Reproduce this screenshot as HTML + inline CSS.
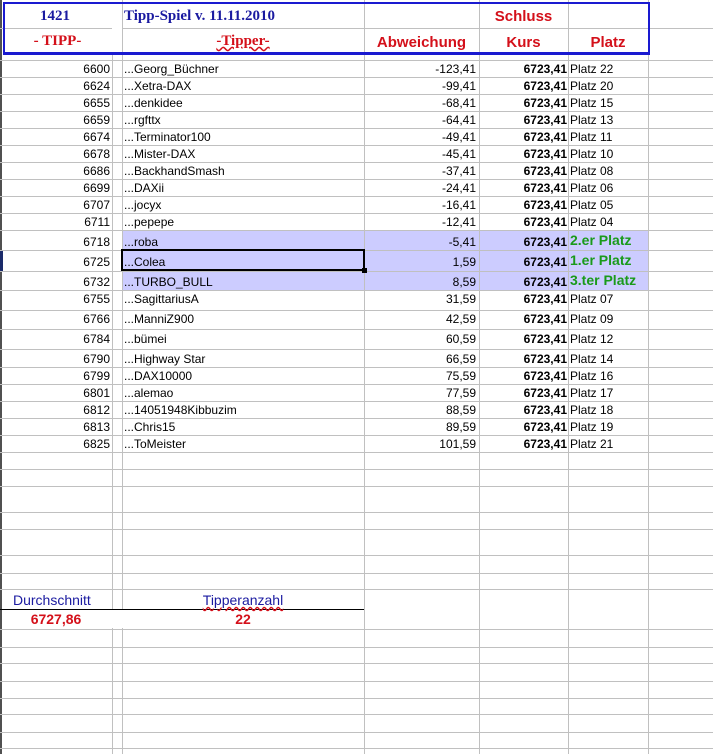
<!DOCTYPE html>
<html style="overflow:hidden;height:754px"><head><meta charset="utf-8"><style>
body{margin:0;width:713px;height:754px;background:#fff;position:relative;overflow:hidden;font-family:"Liberation Sans",Arial,sans-serif;font-size:12px;color:#000}
div{position:absolute}
.v{top:0;width:1px;height:754px;background:#c0c0c0}
.h{left:0;width:713px;height:1px;background:#c0c0c0}
.n{width:110px;left:0;text-align:right}
.nm{left:124px}
.ab{left:364px;width:112px;text-align:right}
.k{left:479px;width:88px;text-align:right;font-weight:bold}
.p{left:570px}
.g{left:570px;color:#1a9a1a;font-weight:bold;font-size:14px}
.ser{font-family:"Liberation Serif",serif;font-weight:bold;font-size:15px}
.rh{font-weight:bold;font-size:15px;color:#d4101a;text-align:center}
</style></head><body>
<div style="left:122px;top:230px;width:526px;height:60px;background:#ccccff"></div>
<div class="v" style="left:112px;top:53px;height:701px"></div>
<div class="v" style="left:122px"></div>
<div class="v" style="left:364px"></div>
<div class="v" style="left:479px"></div>
<div class="v" style="left:568px"></div>
<div class="v" style="left:648px"></div>
<div style="left:0;top:0;width:2px;height:754px;background:#505050"></div>
<div style="left:0;top:250px;width:3px;height:21px;background:#1a2a6a"></div>
<div class="h" style="top:28px"></div>
<div class="h" style="top:60px"></div>
<div class="h" style="top:77px"></div><div class="h" style="top:94px"></div><div class="h" style="top:111px"></div><div class="h" style="top:128px"></div><div class="h" style="top:145px"></div><div class="h" style="top:162px"></div><div class="h" style="top:179px"></div><div class="h" style="top:196px"></div><div class="h" style="top:213px"></div><div class="h" style="top:230px"></div><div class="h" style="top:250px"></div><div class="h" style="top:271px"></div><div class="h" style="top:290px"></div><div class="h" style="top:310px"></div><div class="h" style="top:329px"></div><div class="h" style="top:349px"></div><div class="h" style="top:367px"></div><div class="h" style="top:384px"></div><div class="h" style="top:401px"></div><div class="h" style="top:418px"></div><div class="h" style="top:435px"></div><div class="h" style="top:452px"></div><div class="h" style="top:469px"></div><div class="h" style="top:486px"></div><div class="h" style="top:512px"></div><div class="h" style="top:529px"></div><div class="h" style="top:555px"></div><div class="h" style="top:573px"></div><div class="h" style="top:589px"></div><div class="h" style="top:629px"></div><div class="h" style="top:647px"></div><div class="h" style="top:663px"></div><div class="h" style="top:681px"></div><div class="h" style="top:698px"></div><div class="h" style="top:714px"></div><div class="h" style="top:732px"></div><div class="h" style="top:748px"></div>
<div style="left:0;top:609px;width:364px;height:1px;background:#000"></div>
<!-- header box -->
<div style="left:112px;top:0;width:10px;height:53px;background:#fff"></div>
<div style="left:3px;top:2px;width:643px;height:48px;border:2px solid #1a1ad0;border-bottom:3px solid #1a1ad0;background:transparent"></div>
<div class="ser" style="left:10px;width:90px;top:8px;text-align:center;color:#1a1aa0">1421</div>
<div class="ser" style="left:124px;top:8px;color:#1a1aa0">Tipp-Spiel v. 11.11.2010</div>
<div class="rh" style="left:479px;width:89px;top:8px">Schluss</div>
<div class="ser" style="left:10px;width:95px;top:33px;text-align:center;color:#d4101a">- TIPP-</div>
<div class="ser" style="left:122px;width:242px;top:33px;text-align:center;color:#d4101a"><span style="text-decoration:underline wavy #d4101a">-Tipper-</span></div>
<div class="rh" style="left:364px;width:115px;top:34px">Abweichung</div>
<div class="rh" style="left:479px;width:89px;top:34px">Kurs</div>
<div class="rh" style="left:568px;width:80px;top:34px">Platz</div>
<!-- rows -->
<div class="n" style="top:62px">6600</div><div class="nm" style="top:62px">...Georg_Büchner</div><div class="ab" style="top:62px">-123,41</div><div class="k" style="top:62px">6723,41</div><div class="p" style="top:62px">Platz 22</div>
<div class="n" style="top:79px">6624</div><div class="nm" style="top:79px">...Xetra-DAX</div><div class="ab" style="top:79px">-99,41</div><div class="k" style="top:79px">6723,41</div><div class="p" style="top:79px">Platz 20</div>
<div class="n" style="top:96px">6655</div><div class="nm" style="top:96px">...denkidee</div><div class="ab" style="top:96px">-68,41</div><div class="k" style="top:96px">6723,41</div><div class="p" style="top:96px">Platz 15</div>
<div class="n" style="top:113px">6659</div><div class="nm" style="top:113px">...rgfttx</div><div class="ab" style="top:113px">-64,41</div><div class="k" style="top:113px">6723,41</div><div class="p" style="top:113px">Platz 13</div>
<div class="n" style="top:130px">6674</div><div class="nm" style="top:130px">...Terminator100</div><div class="ab" style="top:130px">-49,41</div><div class="k" style="top:130px">6723,41</div><div class="p" style="top:130px">Platz 11</div>
<div class="n" style="top:147px">6678</div><div class="nm" style="top:147px">...Mister-DAX</div><div class="ab" style="top:147px">-45,41</div><div class="k" style="top:147px">6723,41</div><div class="p" style="top:147px">Platz 10</div>
<div class="n" style="top:164px">6686</div><div class="nm" style="top:164px">...BackhandSmash</div><div class="ab" style="top:164px">-37,41</div><div class="k" style="top:164px">6723,41</div><div class="p" style="top:164px">Platz 08</div>
<div class="n" style="top:181px">6699</div><div class="nm" style="top:181px">...DAXii</div><div class="ab" style="top:181px">-24,41</div><div class="k" style="top:181px">6723,41</div><div class="p" style="top:181px">Platz 06</div>
<div class="n" style="top:198px">6707</div><div class="nm" style="top:198px">...jocyx</div><div class="ab" style="top:198px">-16,41</div><div class="k" style="top:198px">6723,41</div><div class="p" style="top:198px">Platz 05</div>
<div class="n" style="top:215px">6711</div><div class="nm" style="top:215px">...pepepe</div><div class="ab" style="top:215px">-12,41</div><div class="k" style="top:215px">6723,41</div><div class="p" style="top:215px">Platz 04</div>
<div class="n" style="top:235px">6718</div><div class="nm" style="top:235px">...roba</div><div class="ab" style="top:235px">-5,41</div><div class="k" style="top:235px">6723,41</div><div class="g" style="top:232px">2.er Platz</div>
<div class="n" style="top:255px">6725</div><div class="nm" style="top:255px">...Colea</div><div class="ab" style="top:255px">1,59</div><div class="k" style="top:255px">6723,41</div><div class="g" style="top:252px">1.er Platz</div>
<div class="n" style="top:275px">6732</div><div class="nm" style="top:275px">...TURBO_BULL</div><div class="ab" style="top:275px">8,59</div><div class="k" style="top:275px">6723,41</div><div class="g" style="top:272px">3.ter Platz</div>
<div style="left:121px;top:249px;width:240px;height:18px;border:2px solid #000"></div>
<div style="left:362px;top:268px;width:5px;height:5px;background:#000"></div>
<div class="n" style="top:292px">6755</div><div class="nm" style="top:292px">...SagittariusA</div><div class="ab" style="top:292px">31,59</div><div class="k" style="top:292px">6723,41</div><div class="p" style="top:292px">Platz 07</div>
<div class="n" style="top:312px">6766</div><div class="nm" style="top:312px">...ManniZ900</div><div class="ab" style="top:312px">42,59</div><div class="k" style="top:312px">6723,41</div><div class="p" style="top:312px">Platz 09</div>
<div class="n" style="top:332px">6784</div><div class="nm" style="top:332px">...bümei</div><div class="ab" style="top:332px">60,59</div><div class="k" style="top:332px">6723,41</div><div class="p" style="top:332px">Platz 12</div>
<div class="n" style="top:352px">6790</div><div class="nm" style="top:352px">...Highway Star</div><div class="ab" style="top:352px">66,59</div><div class="k" style="top:352px">6723,41</div><div class="p" style="top:352px">Platz 14</div>
<div class="n" style="top:369px">6799</div><div class="nm" style="top:369px">...DAX10000</div><div class="ab" style="top:369px">75,59</div><div class="k" style="top:369px">6723,41</div><div class="p" style="top:369px">Platz 16</div>
<div class="n" style="top:386px">6801</div><div class="nm" style="top:386px">...alemao</div><div class="ab" style="top:386px">77,59</div><div class="k" style="top:386px">6723,41</div><div class="p" style="top:386px">Platz 17</div>
<div class="n" style="top:403px">6812</div><div class="nm" style="top:403px">...14051948Kibbuzim</div><div class="ab" style="top:403px">88,59</div><div class="k" style="top:403px">6723,41</div><div class="p" style="top:403px">Platz 18</div>
<div class="n" style="top:420px">6813</div><div class="nm" style="top:420px">...Chris15</div><div class="ab" style="top:420px">89,59</div><div class="k" style="top:420px">6723,41</div><div class="p" style="top:420px">Platz 19</div>
<div class="n" style="top:437px">6825</div><div class="nm" style="top:437px">...ToMeister</div><div class="ab" style="top:437px">101,59</div><div class="k" style="top:437px">6723,41</div><div class="p" style="top:437px">Platz 21</div>
<!-- footer -->
<div style="left:2px;top:591px;width:110px;background:#fff;height:17px"></div>
<div style="left:123px;top:591px;width:240px;background:#fff;height:17px"></div>
<div style="left:2px;top:610px;width:361px;background:#fff;height:18px"></div>
<div style="left:13px;top:592px;font-size:14px;color:#1a1aa0">Durchschnitt</div>
<div style="left:122px;width:242px;top:592px;font-size:14px;color:#1a1aa0;text-align:center"><span style="text-decoration:underline wavy #d4101a">Tipperanzahl</span></div>
<div style="left:0;width:112px;top:611px;font-size:14px;font-weight:bold;color:#d4101a;text-align:center">6727,86</div>
<div style="left:122px;width:242px;top:611px;font-size:14px;font-weight:bold;color:#d4101a;text-align:center">22</div>
</body></html>
